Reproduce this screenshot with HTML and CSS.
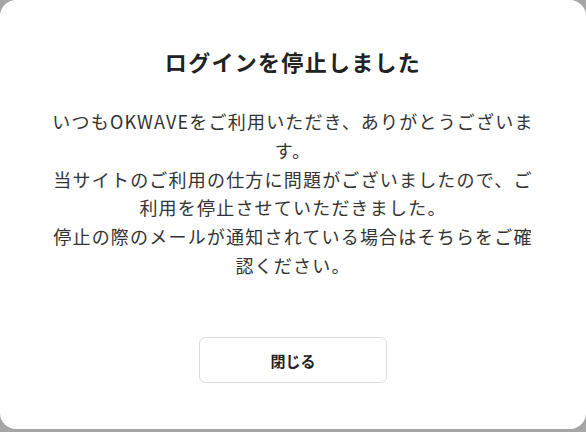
FILE: index.html
```html
<!DOCTYPE html>
<html lang="ja">
<head>
<meta charset="utf-8">
<link rel="stylesheet" href="styles.css">
</head>
<body>
<div class="modal">
  <h1 class="title">ログインを停止しました</h1>
  <div class="message">
    <p>いつもOKWAVEをご利用いただき、ありがとうございます。</p>
    <p>当サイトのご利用の仕方に問題がございましたので、ご利用を停止させていただきました。</p>
    <p>停止の際のメールが通知されている場合はそちらをご確認ください。</p>
  </div>
  <div class="actions">
    <button class="close-btn" type="button">閉じる</button>
  </div>
</div>
</body>
</html>
```
FILE: styles.css
```css
html, body {
  margin: 0;
  padding: 0;
}
body {
  background: #a6a6a6;
  width: 586px;
  height: 432px;
  overflow: hidden;
  font-family: "Noto Sans CJK JP", "Noto Sans", sans-serif;
}
.modal {
  box-sizing: border-box;
  width: 586px;
  height: 429px;
  background: #fff;
  border-radius: 16px;
  padding: 45px 50px 46px;
  display: flex;
  flex-direction: column;
  align-items: center;
  color: #333;
}
.title {
  margin: 0;
  font-size: 22px;
  line-height: 32px;
  font-weight: 700;
  color: #222;
  letter-spacing: 1.3px;
}
.message {
  margin-top: 30px;
  text-align: center;
  font-size: 18px;
  line-height: 28.8px;
  letter-spacing: 1.2px;
}
.message p {
  margin: 0;
}
.actions {
  margin-top: auto;
}
.close-btn {
  width: 188px;
  height: 46px;
  background: #fff;
  border: 1px solid #dcdcdc;
  border-radius: 6px;
  font-family: inherit;
  font-size: 15px;
  font-weight: 700;
  color: #222;
}
```
